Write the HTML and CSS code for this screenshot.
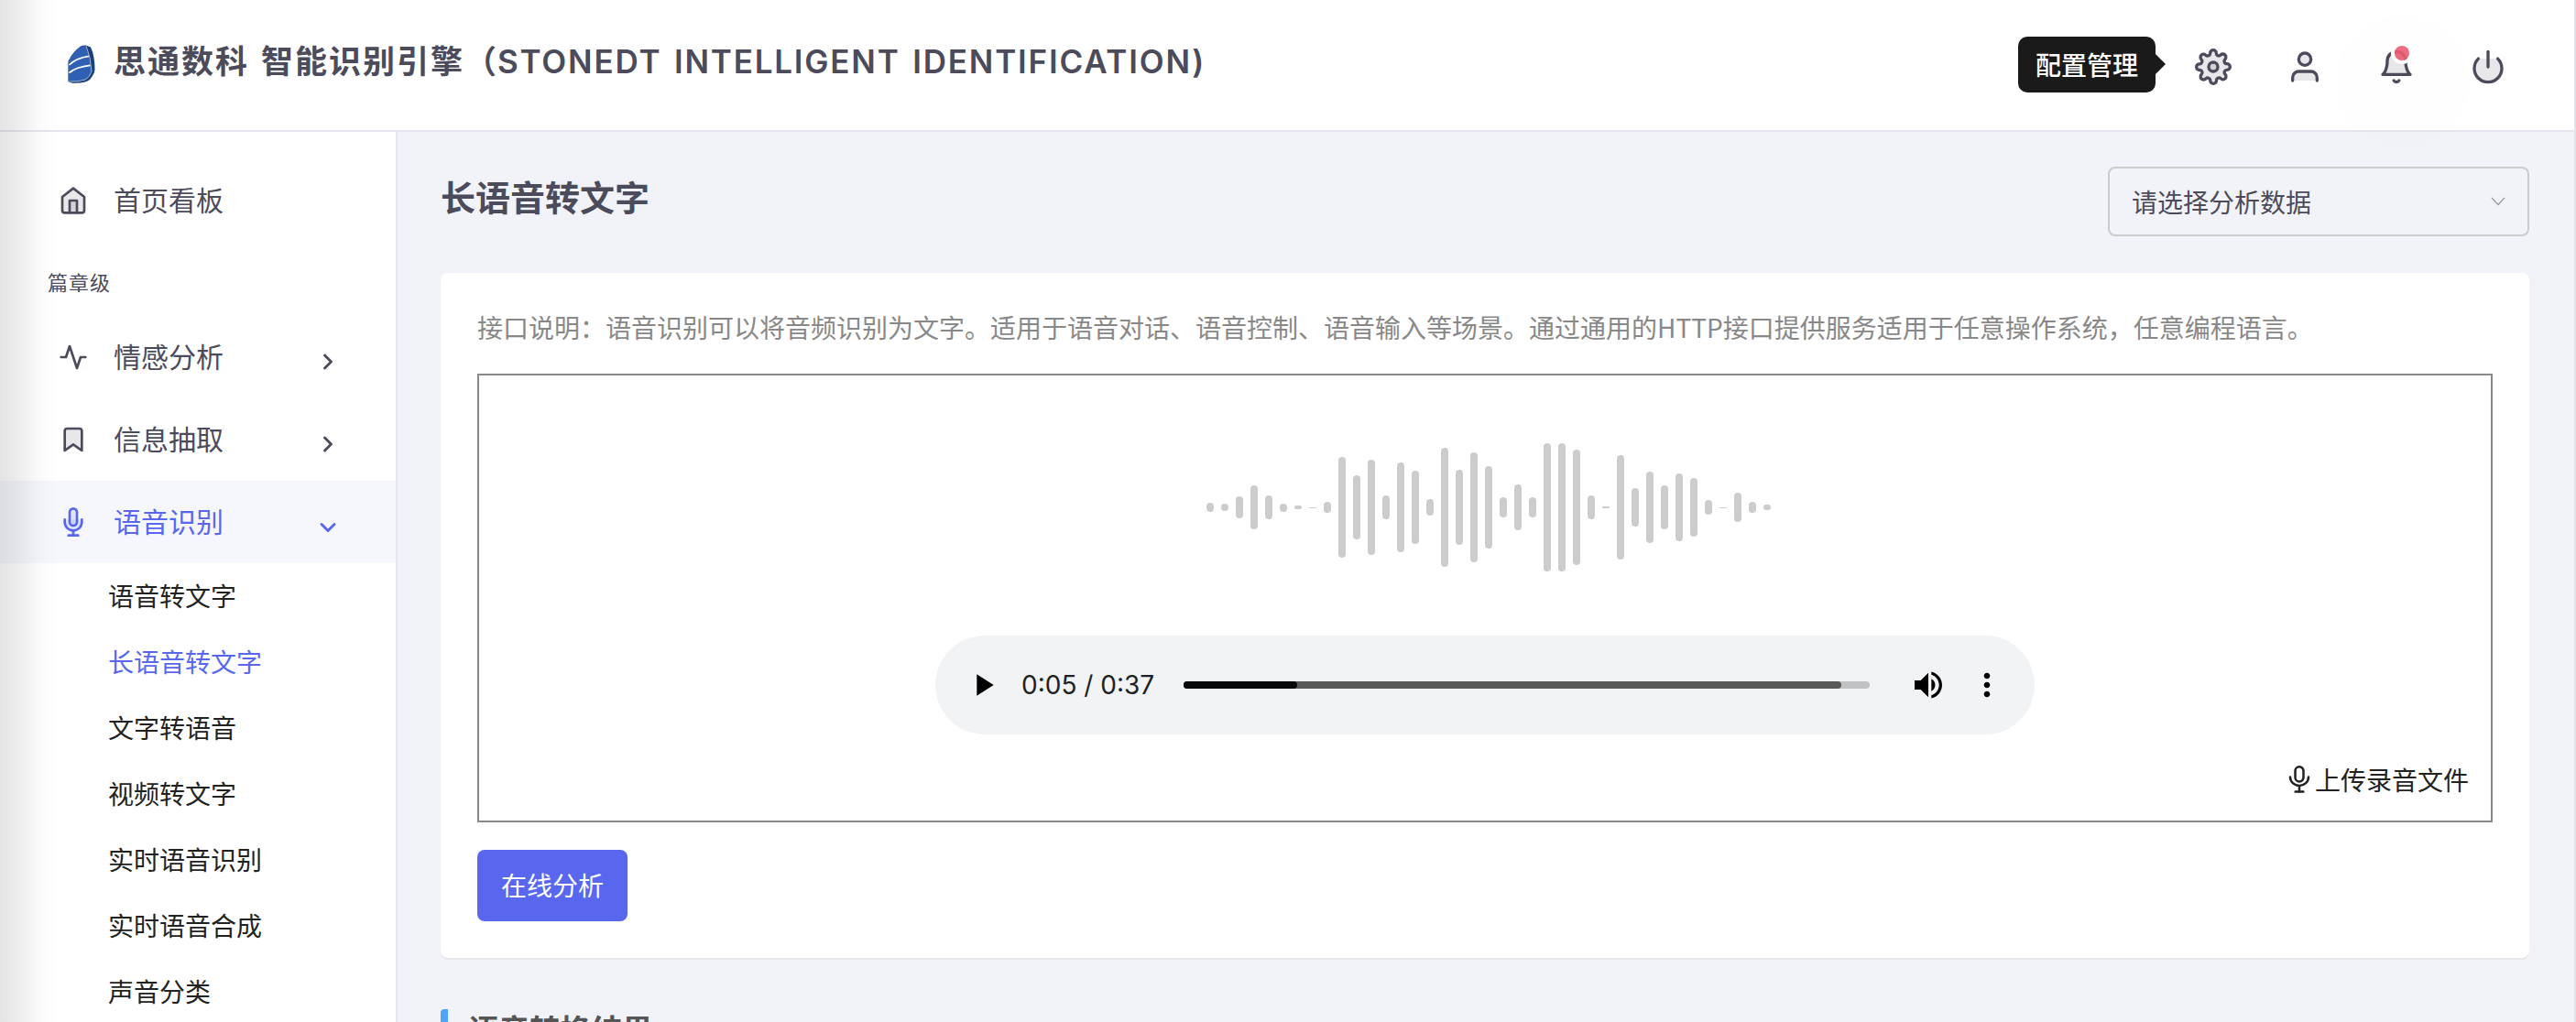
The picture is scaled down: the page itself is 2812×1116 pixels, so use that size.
FILE: index.html
```html
<!DOCTYPE html>
<html lang="zh-CN">
<head>
<meta charset="utf-8">
<title>长语音转文字</title>
<link rel="stylesheet" href="styles.css">
</head>
<body>
<header class="topbar">
  <div class="brand">
    <svg class="logo" viewBox="0 0 30 42">
      <path d="M20 0.5 L25 2.5 Q29.5 12 29.5 27 Q29 32 24 38 Q20 41.5 8 41.8 Q2 41.8 0.5 40 L0.5 18 Q5 8 14 1.5 Q17 0 20 0.5Z" fill="#1c3f78"/>
      <path d="M19 1 Q24 12 25.5 29 Q24 35 19 37.5 Q12 40 0.8 39.5 L0.8 18 Q5 9 13 2.5 Q16 0.8 19 1Z" fill="#2f60b4"/>
      <path d="M20 1 Q25 13 26 29 Q24 35.5 19 38 Q12 40.5 1 40" fill="none" stroke="#a9bbd6" stroke-width="1"/>
      <path d="M1.5 22 Q9 14.5 23 12.4 M1.5 30.5 Q9 24 24.5 22.3" fill="none" stroke="#fff" stroke-width="1.7"/>
    </svg>
    <h1 class="brand-name">思通数科 智能识别引擎（<span class="brand-latin">STONEDT INTELLIGENT IDENTIFICATION)</span></h1>
  </div>
  <nav class="tools">
    <div class="tooltip">配置管理</div>
    <svg class="tool feather" viewBox="0 0 24 24"><circle cx="12" cy="12" r="3"/><path d="M19.4 15a1.65 1.65 0 0 0 .33 1.82l.06.06a2 2 0 0 1 0 2.83 2 2 0 0 1-2.83 0l-.06-.06a1.65 1.65 0 0 0-1.82-.33 1.65 1.65 0 0 0-1 1.51V21a2 2 0 0 1-2 2 2 2 0 0 1-2-2v-.09A1.65 1.65 0 0 0 9 19.4a1.65 1.65 0 0 0-1.82.33l-.06.06a2 2 0 0 1-2.83 0 2 2 0 0 1 0-2.83l.06-.06a1.65 1.65 0 0 0 .33-1.82 1.65 1.65 0 0 0-1.51-1H3a2 2 0 0 1-2-2 2 2 0 0 1 2-2h.09A1.65 1.65 0 0 0 4.6 9a1.65 1.65 0 0 0-.33-1.82l-.06-.06a2 2 0 0 1 0-2.83 2 2 0 0 1 2.83 0l.06.06a1.65 1.65 0 0 0 1.82.33H9a1.65 1.65 0 0 0 1-1.51V3a2 2 0 0 1 2-2 2 2 0 0 1 2 2v.09a1.65 1.65 0 0 0 1 1.51 1.65 1.65 0 0 0 1.82-.33l.06-.06a2 2 0 0 1 2.83 0 2 2 0 0 1 0 2.83l-.06.06a1.65 1.65 0 0 0-.33 1.82V9a1.65 1.65 0 0 0 1.51 1H21a2 2 0 0 1 2 2 2 2 0 0 1-2 2h-.09a1.65 1.65 0 0 0-1.51 1z"/></svg>
    <svg class="tool feather" viewBox="0 0 24 24"><path d="M20 21v-2a4 4 0 0 0-4-4H8a4 4 0 0 0-4 4v2"/><circle cx="12" cy="7" r="4"/></svg>
    <div class="bell">
      <svg class="tool feather" viewBox="0 0 24 24"><path d="M18 8A6 6 0 0 0 6 8c0 7-3 9-3 9h18s-3-2-3-9"/><path d="M13.73 21a2 2 0 0 1-3.46 0"/></svg>
      <span class="bell-dot"></span>
      <span class="ripple"></span>
    </div>
    <svg class="tool feather" viewBox="0 0 24 24"><path d="M18.36 6.64a9 9 0 1 1-12.73 0"/><path d="M12 2v10"/></svg>
  </nav>
</header>
<div class="body">
  <aside class="sidebar">
    <a class="nav-item"><svg class="nav-icon feather" viewBox="0 0 24 24"><path d="M3 9l9-7 9 7v11a2 2 0 0 1-2 2H5a2 2 0 0 1-2-2z"/><path d="M9 22V12h6v10"/></svg><span>首页看板</span></a>
    <div class="nav-label">篇章级</div>
    <a class="nav-item"><svg class="nav-icon feather" viewBox="0 0 24 24"><path class="nofill" d="M22 12h-4l-3 9L9 3l-3 9H2"/></svg><span>情感分析</span><svg class="arrow" viewBox="0 0 24 24"><path d="M9 18l6-6-6-6"/></svg></a>
    <a class="nav-item"><svg class="nav-icon feather" viewBox="0 0 24 24"><path d="M19 21l-7-5-7 5V5a2 2 0 0 1 2-2h10a2 2 0 0 1 2 2z"/></svg><span>信息抽取</span><svg class="arrow" viewBox="0 0 24 24"><path d="M9 18l6-6-6-6"/></svg></a>
    <a class="nav-item active"><svg class="nav-icon feather" viewBox="0 0 24 24"><path d="M12 1a3 3 0 0 0-3 3v8a3 3 0 0 0 6 0V4a3 3 0 0 0-3-3z"/><path d="M19 10v2a7 7 0 0 1-14 0v-2"/><path d="M12 19v4M8 23h8"/></svg><span>语音识别</span><svg class="arrow" viewBox="0 0 24 24"><path d="M6 9l6 6 6-6"/></svg></a>
    <ul class="subnav">
      <li>语音转文字</li>
      <li class="current">长语音转文字</li>
      <li>文字转语音</li>
      <li>视频转文字</li>
      <li>实时语音识别</li>
      <li>实时语音合成</li>
      <li>声音分类</li>
    </ul>
  </aside>
  <main class="main">
    <div class="page-head">
      <h2 class="page-title">长语音转文字</h2>
      <div class="select"><span>请选择分析数据</span><svg class="select-arrow" viewBox="0 0 16 10"><path d="M1 1l7 7.5L15 1"/></svg></div>
    </div>
    <section class="card">
      <p class="desc">接口说明：语音识别可以将音频识别为文字。适用于语音对话、语音控制、语音输入等场景。通过通用的HTTP接口提供服务适用于任意操作系统，任意编程语言。</p>
      <div class="stage">
        <div class="wave">
          <i style="height:10px"></i><i style="height:8px"></i><i style="height:24px"></i><i style="height:48px"></i><i style="height:26px"></i><i style="height:9px"></i><i style="height:4px"></i><i style="height:1px"></i><i style="height:12px"></i><i style="height:110px"></i><i style="height:70px"></i><i style="height:104px"></i><i style="height:26px"></i><i style="height:98px"></i><i style="height:80px"></i><i style="height:18px"></i><i style="height:130px"></i><i style="height:82px"></i><i style="height:120px"></i><i style="height:90px"></i><i style="height:22px"></i><i style="height:50px"></i><i style="height:22px"></i><i style="height:140px"></i><i style="height:140px"></i><i style="height:126px"></i><i style="height:26px"></i><i style="height:2px"></i><i style="height:114px"></i><i style="height:42px"></i><i style="height:78px"></i><i style="height:48px"></i><i style="height:74px"></i><i style="height:64px"></i><i style="height:16px"></i><i style="height:1px"></i><i style="height:32px"></i><i style="height:12px"></i><i style="height:6px"></i>
        </div>
        <div class="player">
          <svg class="player-icon" viewBox="0 0 24 24"><path d="M8 5v14l11-7z"/></svg>
          <span class="time">0:05 / 0:37</span>
          <div class="track"><div class="buffered" style="width:95.9%"></div><div class="played" style="width:16.6%"></div></div>
          <svg class="player-icon" viewBox="0 0 24 24"><path d="M3 9v6h4l5 5V4L7 9H3zm13.500 3c0-1.770-1.020-3.290-2.500-4.030v8.050c1.480-.730 2.500-2.250 2.500-4.020zM14 3.230v2.060c2.890.860 5 3.540 5 6.710s-2.110 5.850-5 6.710v2.060c4.010-.910 7-4.490 7-8.770s-2.990-7.860-7-8.770z"/></svg>
          <svg class="player-icon more" viewBox="0 0 24 24"><path d="M12 8c1.100 0 2-.9 2-2s-.9-2-2-2-2 .9-2 2 .9 2 2 2zm0 2c-1.100 0-2 .9-2 2s.9 2 2 2 2-.9 2-2-.9-2-2-2zm0 6c-1.100 0-2 .9-2 2s.9 2 2 2 2-.9 2-2-.9-2-2-2z"/></svg>
        </div>
        <div class="upload"><svg class="upload-icon" viewBox="0 0 24 24"><path d="M12 1a3.600 3.600 0 0 0-3.600 3.600v5.800a3.600 3.600 0 0 0 7.200 0V4.600A3.600 3.600 0 0 0 12 1z"/><path d="M20 10a8 7.500 0 0 1-16 0M12 18v5M8.500 22.800h7"/></svg><span>上传录音文件</span></div>
      </div>
      <button class="primary">在线分析</button>
    </section>
    <h3 class="section-title">语音转换结果</h3>
  </main>
</div>
<div class="edge-shade"></div>
</body>
</html>
```
FILE: styles.css
```css
* { box-sizing: border-box; margin: 0; padding: 0; }
html, body { height: 1116px; overflow: hidden; }
body {
  display: flex;
  flex-direction: column;
  position: relative;
  background: #fff;
  color: #4c4b5b;
  font: 28px/40px "Noto Sans CJK SC", sans-serif;
  white-space: nowrap;
}
svg { flex: none; display: block; }
.feather {
  fill: rgba(76, 75, 91, 0.13);
  stroke: #4c4b5b;
  stroke-width: 2;
  stroke-linecap: round;
  stroke-linejoin: round;
}
.feather .nofill { fill: none; }

.topbar {
  flex: none;
  height: 144px;
  display: flex;
  justify-content: space-between;
  border-bottom: 2px solid #e6e6ee;
  border-right: 2px solid #e3e4e8;
  padding: 0 74px 0 74px;
}
.brand { display: flex; gap: 20px; padding-top: 40px; }
.logo { width: 30px; height: 42px; margin-top: 9px; }
.brand-name { font-size: 35px; line-height: 50px; letter-spacing: 2px; word-spacing: 3px; font-weight: 700; }
.brand-latin { margin-left: -1px; font-family: Inter, "Liberation Sans", sans-serif; font-weight: 600; letter-spacing: 1.800px; }

.tools { display: flex; gap: 60px; padding-top: 53px; }
.tool { width: 40px; height: 40px; }
.tooltip {
  position: relative;
  width: 150px;
  height: 61px;
  margin: -13px -17px 0 0;
  border-radius: 10px;
  background: #1a1a1a;
  color: #fff;
  font-weight: 500;
  line-height: 60px;
  text-align: center;
}
.tooltip::after {
  content: "";
  position: absolute;
  left: 149px;
  top: 18px;
  border: 12px solid transparent;
  border-left-color: #1a1a1a;
  border-right: 0;
}
.bell { position: relative; width: 40px; height: 40px; }
.bell-dot {
  position: absolute;
  left: 18px;
  top: -3px;
  width: 16px;
  height: 16px;
  border-radius: 50%;
  background: rgba(238, 92, 114, 0.9);
  box-shadow: 0 0 0 4px #fff;
}
.ripple {
  position: absolute;
  left: -47px;
  top: -36px;
  width: 146px;
  height: 146px;
  border-radius: 50%;
  background: rgba(0, 0, 0, 0.004);
}

.body { flex: 1; display: flex; min-height: 0; }
.sidebar { flex: none; width: 434px; border-right: 2px solid #e6e6ee; padding-top: 30px; }
.nav-item {
  display: flex;
  align-items: center;
  height: 90px;
  padding: 0 60px 0 64px;
  font-size: 30px;
}
.nav-item span { margin: -4px auto 0 28px; }
.nav-icon { width: 32px; height: 32px; }
.arrow {
  width: 28px;
  height: 28px;
  margin-top: 9px;
  fill: none;
  stroke: #4c4b5b;
  stroke-width: 2.500;
  stroke-linecap: round;
  stroke-linejoin: round;
}
.nav-label { height: 81px; padding: 23px 0 0 52px; font-size: 22px; letter-spacing: 1px; }
.active { background: #f6f7fd; color: #5867ee; }
.active .feather { stroke: #5867ee; fill: rgba(88, 103, 238, 0.13); }
.active .arrow { margin-top: 11px; stroke: #5867ee; }
.subnav { list-style: none; color: #222; }
.subnav li { height: 72px; padding-left: 118px; line-height: 70px; }
.subnav .current { color: #5867ee; }

.main {
  flex: 1;
  min-width: 0;
  background: #f2f3f8;
  border-right: 2px solid #e3e4e8;
  padding: 38px 49px 0 47px;
}
.page-head { display: flex; justify-content: space-between; height: 116px; }
.page-title { font-size: 38px; line-height: 64px; font-weight: 700; }
.select {
  display: flex;
  align-items: center;
  justify-content: space-between;
  width: 460px;
  height: 76px;
  border: 2px solid #ccc;
  border-radius: 8px;
  padding: 0 24px;
}
.select-arrow { width: 16px; height: 10px; fill: none; stroke: #999; stroke-width: 1.200; }
.card {
  height: 748px;
  padding: 39px 40px 40px;
  border-radius: 8px;
  background: #fff;
  box-shadow: 0 2px 0 #e6e7ea;
}
.desc { height: 71px; color: #888; }
.stage {
  display: flex;
  flex-direction: column;
  align-items: center;
  height: 490px;
  border: 2px solid #888;
}
.wave {
  display: flex;
  align-items: center;
  gap: 8px;
  height: 140px;
  margin: 74px 0 0 8px;
}
.wave i { width: 8px; border-radius: 4px; background: #ccc; }
.player {
  display: flex;
  align-items: center;
  width: 1200px;
  height: 108px;
  margin-top: 70px;
  padding: 0 32px;
  border-radius: 54px;
  background: #f1f3f4;
  color: #202124;
}
.player-icon { width: 40px; height: 40px; fill: #000; }
.time { width: 177px; margin: 0 0 0 22px; font-family: Inter, "Liberation Sans", sans-serif; }
.track {
  display: grid;
  width: 749px;
  height: 8px;
  margin-right: 44px;
  border-radius: 4px;
  background: #c1c2c3;
}
.buffered, .played { grid-area: 1 / 1; height: 8px; border-radius: 4px; background: #595959; }
.played { background: #0a0a0a; }
.more { margin-left: 24px; }
.upload {
  display: flex;
  align-items: center;
  gap: 2px;
  align-self: flex-end;
  margin: 29px 24px 0 0;
  color: #222;
}
.upload-icon { width: 30px; height: 32px; fill: none; stroke: #222; stroke-width: 2; stroke-linecap: round; }
.primary {
  display: block;
  width: 164px;
  height: 78px;
  margin-top: 30px;
  padding-bottom: 2px;
  border: 0;
  border-radius: 8px;
  background: #5867ee;
  color: #fff;
  font: inherit;
}
.section-title {
  margin-top: 56px;
  padding-left: 22px;
  border-left: 8px solid #4da6f7;
  border-radius: 4px;
  color: #555;
  font-size: 33.600px;
  line-height: 44px;
}
.edge-shade {
  position: absolute;
  left: 0;
  top: 0;
  width: 64px;
  height: 1116px;
  background: linear-gradient(90deg, rgba(0, 0, 0, 0.105), rgba(0, 0, 0, 0.065) 35%, rgba(0, 0, 0, 0.02) 65%, rgba(0, 0, 0, 0));
}
```
